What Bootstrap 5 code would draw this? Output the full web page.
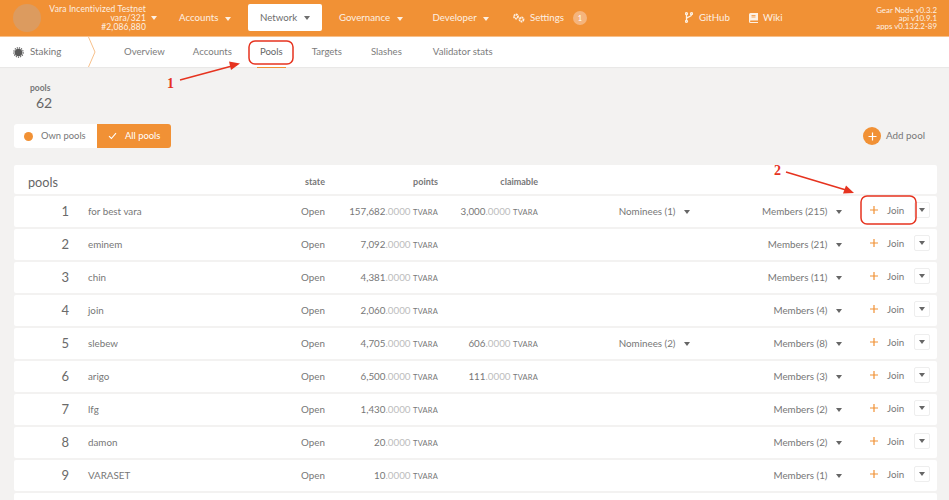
<!DOCTYPE html>
<html lang="en"><head><meta charset="utf-8"><title>Pools</title>
<link href="https://cdn.jsdelivr.net/npm/bootstrap@5.3.0/dist/css/bootstrap.min.css" rel="stylesheet">
<style>
html,body{height:500px;overflow:hidden}
body{background:#f3f2f1;font-family:"Lato","Liberation Sans",sans-serif;color:#777;font-size:9.8px;position:relative;line-height:1.2}
.topbar{height:37px;background:#f19135;color:#fdf0e3;border-bottom:1px solid #f7c08b;font-size:9.7px}
.logo-disc{width:28px;height:28px;border-radius:50%;background:#dc9b5f;margin-left:13px;flex:none}
.chain{width:97px;margin-left:8px;font-size:8.5px;letter-spacing:.15px;line-height:9px;text-align:right;flex:none;white-space:nowrap}
.carr{display:inline-block;width:0;height:0;border-left:3.5px solid transparent;border-right:3.5px solid transparent;border-top:4px solid currentColor;vertical-align:middle}
.chain-car{width:25px;flex:none;padding-left:5px;margin-top:-1px}
.top-item{flex:none;white-space:nowrap}
.top-item .carr{margin-left:4px}
.t-acc{margin-left:8px}
.active-tab{width:74px;height:27px;background:#fff;color:#6e6e6e;border-radius:2px;justify-content:center;margin:0 17px 1px 17px}
.t-dev{margin-left:30px}
.t-set{margin-left:23px}
.t-git{margin-left:98px}
.t-wiki{margin-left:19px}
.cog-ic{margin:0 5px 0 0}
.git-ic{margin-right:6px}
.wiki-ic{margin-right:5px}
.note-dot{width:14px;height:14px;border-radius:50%;background:#f5b47c;color:#fff;font-size:7.5px;margin-left:9px}
.ver{margin-left:auto;margin-right:12px;text-align:right;font-size:7.9px;line-height:8.2px;white-space:nowrap}
.subbar{height:30px;background:#fff;box-shadow:0 1px 1px rgba(0,0,0,.04);font-size:9.6px}
.stk{width:88px;padding-left:13px;gap:6px;flex:none;font-size:9.8px}
.crumb{width:8px;height:30px;flex:none}
.subtab{color:#7c7c7c;margin-right:28px;position:relative;white-space:nowrap;height:30px;display:flex;align-items:center}
.subtab-first{margin-left:28px}
.subtab-m{margin-right:29px}
.subtab-l{margin-right:31px}
.subtab-on{color:#666}
.subtab-on::after{content:"";position:absolute;left:-3px;right:-3px;bottom:-1px;height:1px;background:#f19135}
.summ{margin:16px 0 0 30px;height:30px}
.summ-l{font-size:8.5px;font-weight:700;line-height:11px;color:#777}
.summ-v{font-size:14px;line-height:17px;margin-left:6px;color:#666}
.ctl{margin:11px 24px 0 14px;height:24px}
.tog{height:24px;border:0;border-radius:3px;font-size:9.4px;padding:0;display:flex;align-items:center;--bs-btn-color:#777}
.tog-a{width:83px;background:#fff;color:#777;border-radius:3px 0 0 3px;padding-left:10px;gap:8px}
.tog-b{width:74px;background:#f19135;color:#fff;border-radius:0 3px 3px 0;padding-left:11px;gap:8px}
.o-dot{width:9px;height:9px;background:#f19135;border-radius:50%}
.addp{margin-left:auto;gap:5px}
.add-c{width:18px;height:18px;border-radius:50%;background:#f19135}
.plist{margin:17px 12px 0 14px;display:flex;flex-direction:column;gap:2px}
.prow{height:31px;background:#fff;border-radius:2px}
.phead{height:29px;font-size:9px;font-weight:700;color:#777;padding-top:6px}
.ptitle{width:225px;padding-left:14px;font-size:12.7px;font-weight:400;color:#666;flex:none}
.c-num{width:55px;text-align:right;font-size:13px;flex:none;color:#6a6a6a}
.c-name{width:170px;margin-left:19px;flex:none}
.c-state{width:67px;text-align:right;flex:none}
.c-state-h{width:86px}
.c-pts{width:113px;text-align:right;flex:none;white-space:nowrap}
.c-cl{width:100px;text-align:right;flex:none;white-space:nowrap}
.c-nom{width:152px;text-align:right;flex:none;white-space:nowrap}
.c-mem{width:152px;text-align:right;flex:none;white-space:nowrap}
.c-nom .carr,.c-mem .carr{margin-left:6px;color:#666}
.dec{color:#bdbdbd}
.unit{font-size:7.5px;letter-spacing:.2px}
.join{margin-left:20px;width:52px;height:16px;margin-bottom:3px;gap:8px;padding:0 0 0 7px;border:0;font-size:9.8px;color:#777;display:flex;align-items:center;--bs-btn-color:#777}
.more{width:16px;height:16px;margin-bottom:3px;border:1px solid #eeeeee;border-radius:2px;color:#666;background:#fff}
.notes{position:absolute;left:0;top:0;width:949px;height:500px;pointer-events:none}
.notes text{font-family:"Liberation Serif",serif;font-weight:700;font-size:14px;fill:#e6331f}
</style></head><body>
<header class="topbar d-flex align-items-center">
  <div class="logo-disc"></div>
  <div class="chain"><div>Vara Incentivized Testnet</div><div>vara/321</div><div>#2,086,880</div></div>
  <div class="chain-car"><span class="carr"></span></div>
  <div class="top-item t-acc">Accounts <span class="carr"></span></div>
  <div class="active-tab d-flex align-items-center top-item">Network&nbsp;<span class="carr"></span></div>
  <div class="top-item">Governance <span class="carr"></span></div>
  <div class="top-item t-dev">Developer <span class="carr"></span></div>
  <div class="top-item t-set d-flex align-items-center">
    <svg class="cog-ic" width="13" height="10" viewBox="0 0 13 10"><circle cx="4" cy="3.500" r="2" fill="none" stroke="#fdf0e3" stroke-width="1.800" stroke-dasharray="1.600 .5"/><circle cx="9.500" cy="6.500" r="2" fill="none" stroke="#fdf0e3" stroke-width="1.800" stroke-dasharray="1.600 .5"/></svg>
    Settings<span class="note-dot d-flex align-items-center justify-content-center">1</span></div>
  <div class="top-item t-git d-flex align-items-center"><svg class="git-ic" width="8" height="11" viewBox="0 0 8 11" fill="none" stroke="#fdf0e3" stroke-width="1.300"><circle cx="1.500" cy="1.700" r="1"/><circle cx="1.500" cy="9.300" r="1"/><circle cx="6.500" cy="1.700" r="1"/><path d="M1.500 2.700v5.600M6.500 2.700c0 2.500-5 1.700-5 4"/></svg>GitHub</div>
  <div class="top-item t-wiki d-flex align-items-center"><svg class="wiki-ic" width="9" height="10" viewBox="0 0 9 10"><path fill="#fdf0e3" d="M1.500 0H9v7.500H1.600a.8.8 0 0 0 0 1.500H9v1H1.500A1.500 1.500 0 0 1 0 8.500V1.500A1.500 1.500 0 0 1 1.500 0z"/><path stroke="#f19135" stroke-width=".8" d="M2.500 2.500h4M2.500 4h4"/></svg>Wiki</div>
  <div class="ver"><div>Gear Node v0.3.2</div><div>api v10.9.1</div><div>apps v0.132.2-89</div></div>
</header>
<nav class="subbar d-flex align-items-center">
  <div class="stk d-flex align-items-center"><svg width="11" height="11" viewBox="0 0 11 11"><circle cx="5.500" cy="5.500" r="3.800" fill="#5a5a5a"/><circle cx="5.500" cy="5.500" r="4.700" fill="none" stroke="#5a5a5a" stroke-width="1.200" stroke-dasharray="1.200 1"/></svg>Staking</div>
  <svg class="crumb" viewBox="0 0 8 30"><path d="M.5 0 7 15 .5 30" fill="none" stroke="#f7c08b"/></svg>
  <div class="subtab subtab-first">Overview</div>
  <div class="subtab">Accounts</div>
  <div class="subtab subtab-on subtab-m">Pools</div>
  <div class="subtab subtab-m">Targets</div>
  <div class="subtab subtab-l">Slashes</div>
  <div class="subtab">Validator stats</div>
</nav>
<div class="summ"><div class="summ-l">pools</div><div class="summ-v">62</div></div>
<div class="ctl d-flex align-items-center">
  <div class="d-flex">
    <button class="btn tog tog-a"><span class="o-dot"></span>Own pools</button>
    <button class="btn tog tog-b"><svg width="9" height="8" viewBox="0 0 9 8"><path d="M1 4.200 3.400 6.500 8 1.200" fill="none" stroke="#fff" stroke-width="1.100"/></svg>All pools</button>
  </div>
  <div class="addp d-flex align-items-center"><span class="add-c d-flex align-items-center justify-content-center"><svg width="9" height="9" viewBox="0 0 9 9"><path d="M4.500 .5v8M.5 4.500h8" stroke="#fff" stroke-width="1.200"/></svg></span>Add pool</div>
</div>
<main class="plist">
  <div class="prow phead d-flex align-items-center"><div class="ptitle">pools</div><div class="c-state c-state-h">state</div><div class="c-pts">points</div><div class="c-cl">claimable</div></div>

  <div class="prow d-flex align-items-center"><div class="c-num">1</div><div class="c-name">for best vara</div><div class="c-state">Open</div><div class="c-pts">157,682<span class="dec">.0000</span> <span class="unit">TVARA</span></div><div class="c-cl">3,000<span class="dec">.0000</span> <span class="unit">TVARA</span></div><div class="c-nom">Nominees (1) <span class="carr"></span></div><div class="c-mem">Members (215) <span class="carr"></span></div><button class="btn join"><svg width="10" height="10" viewBox="0 0 10 10"><path d="M5 1v8M1 5h8" stroke="#f19135" stroke-width="1.200"/></svg>Join</button><div class="more d-flex align-items-center justify-content-center"><span class="carr"></span></div></div>

  <div class="prow d-flex align-items-center"><div class="c-num">2</div><div class="c-name">eminem</div><div class="c-state">Open</div><div class="c-pts">7,092<span class="dec">.0000</span> <span class="unit">TVARA</span></div><div class="c-cl"></div><div class="c-nom"></div><div class="c-mem">Members (21) <span class="carr"></span></div><button class="btn join"><svg width="10" height="10" viewBox="0 0 10 10"><path d="M5 1v8M1 5h8" stroke="#f19135" stroke-width="1.200"/></svg>Join</button><div class="more d-flex align-items-center justify-content-center"><span class="carr"></span></div></div>

  <div class="prow d-flex align-items-center"><div class="c-num">3</div><div class="c-name">chin</div><div class="c-state">Open</div><div class="c-pts">4,381<span class="dec">.0000</span> <span class="unit">TVARA</span></div><div class="c-cl"></div><div class="c-nom"></div><div class="c-mem">Members (11) <span class="carr"></span></div><button class="btn join"><svg width="10" height="10" viewBox="0 0 10 10"><path d="M5 1v8M1 5h8" stroke="#f19135" stroke-width="1.200"/></svg>Join</button><div class="more d-flex align-items-center justify-content-center"><span class="carr"></span></div></div>

  <div class="prow d-flex align-items-center"><div class="c-num">4</div><div class="c-name">join</div><div class="c-state">Open</div><div class="c-pts">2,060<span class="dec">.0000</span> <span class="unit">TVARA</span></div><div class="c-cl"></div><div class="c-nom"></div><div class="c-mem">Members (4) <span class="carr"></span></div><button class="btn join"><svg width="10" height="10" viewBox="0 0 10 10"><path d="M5 1v8M1 5h8" stroke="#f19135" stroke-width="1.200"/></svg>Join</button><div class="more d-flex align-items-center justify-content-center"><span class="carr"></span></div></div>

  <div class="prow d-flex align-items-center"><div class="c-num">5</div><div class="c-name">slebew</div><div class="c-state">Open</div><div class="c-pts">4,705<span class="dec">.0000</span> <span class="unit">TVARA</span></div><div class="c-cl">606<span class="dec">.0000</span> <span class="unit">TVARA</span></div><div class="c-nom">Nominees (2) <span class="carr"></span></div><div class="c-mem">Members (8) <span class="carr"></span></div><button class="btn join"><svg width="10" height="10" viewBox="0 0 10 10"><path d="M5 1v8M1 5h8" stroke="#f19135" stroke-width="1.200"/></svg>Join</button><div class="more d-flex align-items-center justify-content-center"><span class="carr"></span></div></div>

  <div class="prow d-flex align-items-center"><div class="c-num">6</div><div class="c-name">arigo</div><div class="c-state">Open</div><div class="c-pts">6,500<span class="dec">.0000</span> <span class="unit">TVARA</span></div><div class="c-cl">111<span class="dec">.0000</span> <span class="unit">TVARA</span></div><div class="c-nom"></div><div class="c-mem">Members (3) <span class="carr"></span></div><button class="btn join"><svg width="10" height="10" viewBox="0 0 10 10"><path d="M5 1v8M1 5h8" stroke="#f19135" stroke-width="1.200"/></svg>Join</button><div class="more d-flex align-items-center justify-content-center"><span class="carr"></span></div></div>

  <div class="prow d-flex align-items-center"><div class="c-num">7</div><div class="c-name">lfg</div><div class="c-state">Open</div><div class="c-pts">1,430<span class="dec">.0000</span> <span class="unit">TVARA</span></div><div class="c-cl"></div><div class="c-nom"></div><div class="c-mem">Members (2) <span class="carr"></span></div><button class="btn join"><svg width="10" height="10" viewBox="0 0 10 10"><path d="M5 1v8M1 5h8" stroke="#f19135" stroke-width="1.200"/></svg>Join</button><div class="more d-flex align-items-center justify-content-center"><span class="carr"></span></div></div>

  <div class="prow d-flex align-items-center"><div class="c-num">8</div><div class="c-name">damon</div><div class="c-state">Open</div><div class="c-pts">20<span class="dec">.0000</span> <span class="unit">TVARA</span></div><div class="c-cl"></div><div class="c-nom"></div><div class="c-mem">Members (2) <span class="carr"></span></div><button class="btn join"><svg width="10" height="10" viewBox="0 0 10 10"><path d="M5 1v8M1 5h8" stroke="#f19135" stroke-width="1.200"/></svg>Join</button><div class="more d-flex align-items-center justify-content-center"><span class="carr"></span></div></div>

  <div class="prow d-flex align-items-center"><div class="c-num">9</div><div class="c-name">VARASET</div><div class="c-state">Open</div><div class="c-pts">10<span class="dec">.0000</span> <span class="unit">TVARA</span></div><div class="c-cl"></div><div class="c-nom"></div><div class="c-mem">Members (1) <span class="carr"></span></div><button class="btn join"><svg width="10" height="10" viewBox="0 0 10 10"><path d="M5 1v8M1 5h8" stroke="#f19135" stroke-width="1.200"/></svg>Join</button><div class="more d-flex align-items-center justify-content-center"><span class="carr"></span></div></div>

  <div class="prow"></div>
</main>
<svg class="notes" viewBox="0 0 949 500">
  <rect x="249" y="41" width="44" height="23" rx="6" fill="none" stroke="#e6331f" stroke-width="1.500"/>
  <rect x="861" y="196" width="55" height="28" rx="6" fill="none" stroke="#e6331f" stroke-width="1.500"/>
  <path d="M180 80 232 66" stroke="#e6331f" stroke-width="1.500"/><path d="M240 63.500 229 61.500 231 70z" fill="#e6331f"/>
  <path d="M786 172 846 190" stroke="#e6331f" stroke-width="1.500"/><path d="M854 193 846 185.500 843 193.500z" fill="#e6331f"/>
  <text x="167" y="88">1</text><text x="774" y="175">2</text>
</svg>
<script src="https://cdn.jsdelivr.net/npm/bootstrap@5.3.0/dist/js/bootstrap.bundle.min.js"></script>
</body></html>
